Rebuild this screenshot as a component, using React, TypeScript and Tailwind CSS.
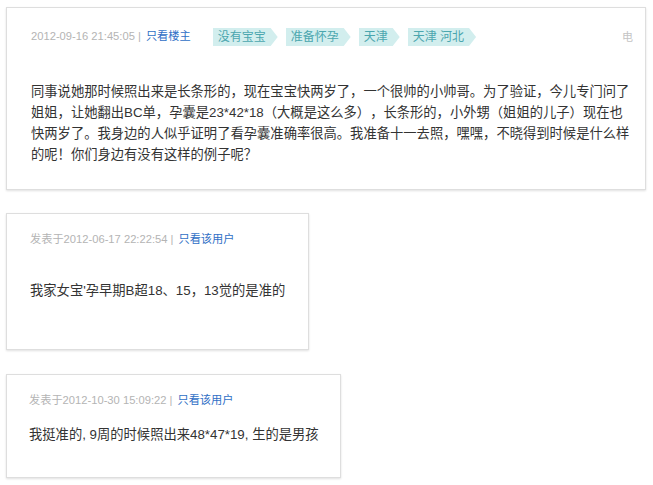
import type { ReactNode } from 'react'

const FONT = "font-['Liberation_Sans','Noto_Sans_CJK_SC',sans-serif]"

function Tag({ children }: { children: ReactNode }) {
  return (
    <span className="inline-flex h-[18px] items-center bg-[#d2eeee] pl-[5px] pr-[12px] text-[12px] text-[#4ba6ae] [clip-path:polygon(0_0,calc(100%_-_7px)_0,100%_50%,calc(100%_-_7px)_100%,0_100%)]">
      {children}
    </span>
  )
}

function Meta({ time, link, prefix }: { time: string; link: string; prefix?: string }) {
  return (
    <div className="flex items-center whitespace-nowrap text-[11.2px] leading-none text-[#b4b4b4]">
      <span>
        {prefix}
        {time} |
      </span>
      <a className="ml-[5px] text-[#2f6fc6]">{link}</a>
    </div>
  )
}

function Card({ className, children }: { className: string; children: ReactNode }) {
  return (
    <div
      className={`ml-[6px] border border-[#dedede] bg-white shadow-[0_1px_2px_rgba(0,0,0,0.12)] ${className}`}
    >
      {children}
    </div>
  )
}

export default function App() {
  return (
    <div
      className={`min-h-[485px] w-[653px] bg-white pt-[7px] [text-spacing-trim:space-all] ${FONT}`}
    >
      <Card className="h-[183px] w-[640px] px-[24px] pt-[20px]">
        <div className="flex items-center">
          <Meta time="2012-09-16 21:45:05" link="只看楼主" />
          <div className="ml-[22px] flex gap-[8px]">
            <Tag>没有宝宝</Tag>
            <Tag>准备怀孕</Tag>
            <Tag>天津</Tag>
            <Tag>天津 河北</Tag>
          </div>
          <span className="ml-auto mr-[-12px] text-[11px] text-[#c4c4c4]">电</span>
        </div>
        <p className="mt-[35px] w-[600px] text-[13.3px] leading-[21px] text-[#333]">
          同事说她那时候照出来是长条形的，现在宝宝快两岁了，一个很帅的小帅哥。为了验证，今儿专门问了姐姐，让她翻出BC单，孕囊是23*42*18（大概是这么多），长条形的，小外甥（姐姐的儿子）现在也快两岁了。我身边的人似乎证明了看孕囊准确率很高。我准备十一去照，嘿嘿，不晓得到时候是什么样的呢！你们身边有没有这样的例子呢？
        </p>
      </Card>

      <Card className="mt-[23px] h-[137px] w-[303px] px-[23px] pt-[20px]">
        <Meta prefix="发表于" time="2012-06-17 22:22:54" link="只看该用户" />
        <p className="mt-[35px] whitespace-nowrap text-[13.3px] leading-[21px] text-[#333]">
          我家女宝'孕早期B超18、15，13觉的是准的
        </p>
      </Card>

      <Card className="mt-[24px] h-[104px] w-[335px] px-[22px] pt-[20px]">
        <Meta prefix="发表于" time="2012-10-30 15:09:22" link="只看该用户" />
        <p className="mt-[18px] whitespace-nowrap text-[13.3px] leading-[21px] text-[#333]">
          我挺准的, 9周的时候照出来48*47*19, 生的是男孩
        </p>
      </Card>
    </div>
  )
}
